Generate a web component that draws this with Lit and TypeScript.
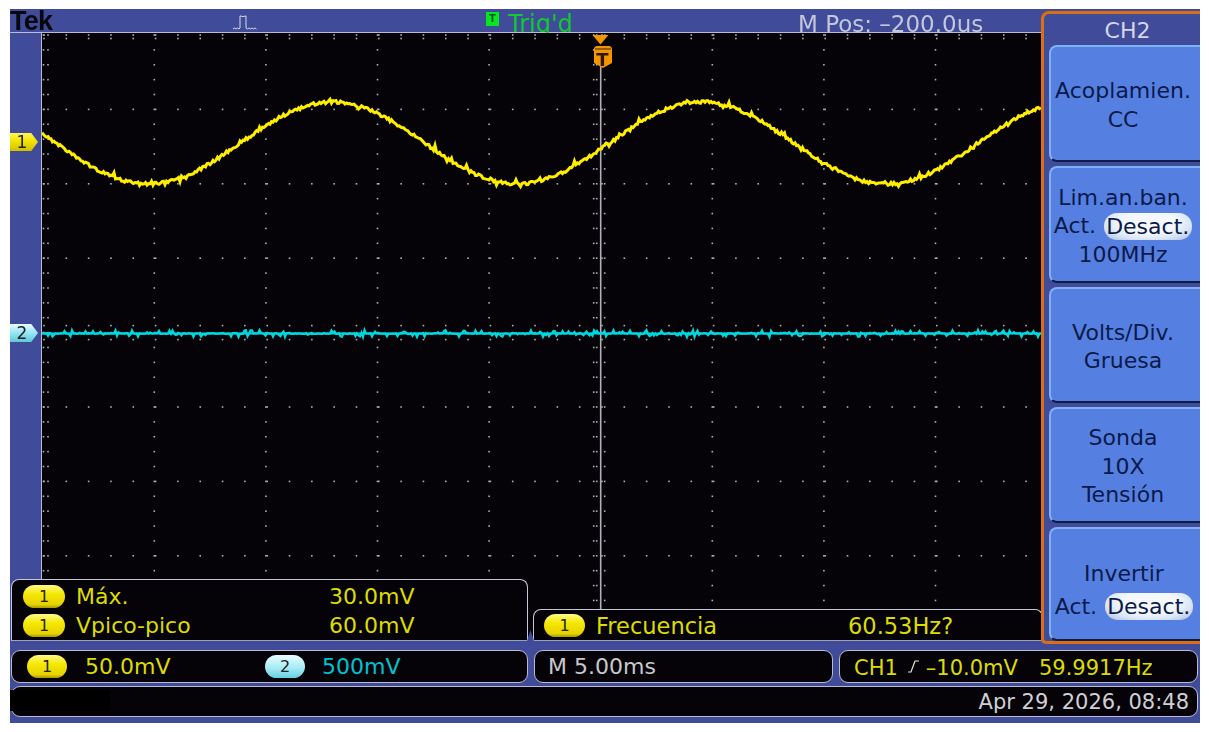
import { LitElement, html, css, svg } from "lit";
import { customElement } from "lit/decorators.js";

const X0 = 41, Y0 = 33, W = 1000, H = 608;
const CX = 599.7, CY = 332.6, DX = 111.6, DY = 74.4;

function rng(seed: number) {
  let s = seed;
  return () => {
    s = (s * 1664525 + 1013904223) % 4294967296;
    return s / 4294967296;
  };
}

function gridDots() {
  const pts: [number, number][] = [];
  for (let k = -5; k <= 4; k++) {
    const x = CX + k * DX;
    if (k === -5 || k === 0) continue;
    for (let y = 35; y < 632; y += DY / 5) pts.push([x, y]);
  }
  for (let r = -4; r <= 4; r++) {
    const y = CY + r * DY;
    for (let k = 0; k < 45; k++) pts.push([X0 + 2 + (k * DX) / 5, y]);
  }
  for (let y = 35; y < 632; y += DY / 5) {
    pts.push([X0 + 1.5, y], [X0 + 6, y]);
    pts.push([CX - 7, y], [CX - 4, y], [CX + 4, y]);
  }
  for (let k = 0; k < 45; k++) {
    const x = X0 + 2 + (k * DX) / 5;
    pts.push([x, CY - 7], [x, CY + 7], [x, 38.5]);
  }
  return pts;
}

function yellowPath() {
  const r = rng(17);
  let d = "";
  for (let x = X0; x <= X0 + W; x += 1.5) {
    const base = 143 + 41 * Math.cos((2 * Math.PI * (x - 147)) / 369);
    const n = (r() - 0.5) * 3 + (r() > 0.92 ? (r() - 0.5) * 8 : 0);
    d += `${d ? "L" : "M"}${x.toFixed(1)} ${(base + n).toFixed(1)}`;
  }
  return d;
}

function cyanPath() {
  const r = rng(91);
  let d = "";
  for (let x = X0; x <= X0 + W; x += 1.5) {
    const n = r() > 0.6 ? (r() - 0.5) * 7 : (r() - 0.5) * 0.8;
    d += `${d ? "L" : "M"}${x.toFixed(1)} ${(333.5 + n).toFixed(1)}`;
  }
  return d;
}

const DOTS = gridDots();
const YEL = yellowPath();
const CYA = cyanPath();

@customElement("app-root")
export class AppRoot extends LitElement {
  static styles = css`
    :host {
      display: block;
      width: 1209px;
      height: 732px;
      background: #fff;
      padding: 9px 9px 9px 10px;
      box-sizing: border-box;
      font-family: "DejaVu Sans", sans-serif;
      overflow: hidden;
    }
    .frame {
      width: 1190px;
      height: 714px;
      background: #404c99;
      display: grid;
      grid-template-columns: 1031px 159px;
      grid-template-rows: 24px 608px 1fr;
      filter: blur(0.5px);
    }
    .top {
      position: relative;
      display: grid;
      grid-template-columns: 222px 254px 22px 290px 1fr;
      align-items: end;
      border-bottom: 1.5px solid #b9bcd0;
      box-sizing: border-box;
    }
    .tek {
      font: bold 27px/24px "Liberation Sans", sans-serif;
      color: #07070f;
      letter-spacing: -0.8px;
      margin-bottom: 1px;
    }
    .pulse { width: 28px; height: 18px; align-self: center; }
    .tbox {
      width: 13px;
      height: 14px;
      background: #06e61e;
      color: #053;
      font: bold 10px/14px "DejaVu Sans", sans-serif;
      text-align: center;
      align-self: start;
      margin-top: 3px;
    }
    .trig {
      color: #13cb2d;
      font-size: 24px;
      line-height: 26px;
      margin-bottom: -3px;
    }
    .mpos {
      color: #c4c7dc;
      font-size: 23px;
      line-height: 24px;
      white-space: pre;
      margin-bottom: -2px;
    }
    .screen {
      grid-column: 1;
      grid-row: 2;
      position: relative;
      display: flex;
    }
    .rail { width: 31px; flex: none; }
    .plot {
      width: 1000px;
      height: 608px;
      background: #050308;
      border-left: 1.5px solid #b9bcd0;
      box-sizing: border-box;
      flex: none;
    }
    .plot svg { display: block; }
    .tag {
      position: absolute;
      left: 0;
      width: 28px;
      height: 18px;
      clip-path: polygon(0 0, 76% 0, 100% 50%, 76% 100%, 0 100%);
      color: #222;
      font: 17px/18px "DejaVu Sans", sans-serif;
      text-align: center;
      padding-right: 4px;
      box-sizing: border-box;
    }
    .tag.one { top: 100px; background: linear-gradient(#fff45a, #f4e300 45%, #d0bf00); }
    .tag.two { top: 291px; background: linear-gradient(#e6fbff, #8fe4f2 55%, #5ec7da); }
    .panel {
      position: absolute;
      background: #050308;
      border: 1.5px solid #c6c8d6;
      border-radius: 8px 8px 0 0;
      border-bottom-color: #9ea1b6;
      box-sizing: border-box;
      color: #dcdc00;
      font-size: 22px;
    }
    .panel.meas {
      left: 1px;
      bottom: 0;
      width: 517px;
      height: 62px;
      display: grid;
      grid-template-columns: 42px 242px 1fr;
      grid-auto-rows: 29px;
      column-gap: 11px;
      align-items: center;
      padding: 2px 0 0 11px;
    }
    .panel.freq {
      left: 523px;
      bottom: 0;
      width: 510px;
      height: 32px;
      display: grid;
      grid-template-columns: 41px 241px 1fr;
      column-gap: 11px;
      align-items: center;
      padding: 1px 0 0 10px;
      font-size: 22.5px;
    }
    .notch {
      position: absolute;
      left: 517px;
      bottom: 0;
      width: 7px;
      height: 11px;
      background: #404c99;
      clip-path: polygon(50% 0, 100% 100%, 0 100%);
    }
    .pill {
      display: block;
      height: 23px;
      border-radius: 12px;
      font: 16px/23px "DejaVu Sans", sans-serif;
      color: #222;
      text-align: center;
    }
    .pill.y { background: linear-gradient(#fff98a, #f5e800 40%, #e6d200 85%, #a69a00); }
    .pill.c { background: linear-gradient(#eafcff, #a8ecf6 55%, #66cfe2); }
    .label, .value { white-space: nowrap; }
    .menu {
      grid-column: 2;
      grid-row: 1 / span 2;
      margin: 2px 0 -3px 0;
      background: #404c99;
      border: solid #dc6f12;
      border-width: 3px 0 3px 3px;
      border-radius: 8px 0 0 5px;
      box-sizing: border-box;
      display: grid;
      grid-template-rows: 27px 117px 117px 116px 116px 114px;
      gap: 4px;
      padding: 0 0 0 5px;
      z-index: 1;
      color: #0b1a4a;
    }
    .menu h2 {
      margin: 0;
      font-weight: 400;
      font-size: 22px;
      line-height: 33px;
      color: #d4d7e8;
      text-align: center;
      padding-left: 6px;
    }
    .btn {
      background: #5580e2;
      border-radius: 8px 0 0 8px;
      border-top: 2px solid #7fb2f2;
      border-left: 2px solid #7fb2f2;
      border-bottom: 2px solid #0e1c4a;
      display: flex;
      flex-direction: column;
      justify-content: center;
      align-items: center;
      font-size: 22px;
      line-height: 28.5px;
      padding: 4px 5px 0 0;
      box-sizing: border-box;
      white-space: nowrap;
    }
    .btn .row { display: flex; align-items: center; gap: 8px; }
    .btn .on {
      background: radial-gradient(ellipse at 50% 35%, #f4f8fd 45%, #d9e4f4 70%, #a4b7dc 100%);
      border-radius: 13px;
      padding: 0 3px 0 2px;
      line-height: 27px;
    }
    .btn.inv { padding-top: 13px; padding-right: 3px; }
    .btn.inv .row { margin-top: 4px; }
    .status {
      grid-column: 1 / span 2;
      grid-row: 3;
      display: grid;
      grid-template-columns: 517px 299px 359px;
      grid-template-rows: 33px 31px;
      column-gap: 6px;
      row-gap: 3px;
      padding: 9px 3px 0 1px;
    }
    .cell {
      background: #050308;
      border: 1.5px solid #b9bcd0;
      border-radius: 9px;
      box-sizing: border-box;
      font-size: 21px;
      display: flex;
      align-items: center;
      white-space: pre;
    }
    .cell.scales { color: #dcdc00; padding-left: 15px; font-size: 22px; }
    .cell.scales .pill { width: 40px; }
    .cell.scales .a { margin-left: 18px; width: 180px; }
    .cell.scales .b { color: #00c3cf; margin-left: 17px; }
    .cell.time { color: #c8c8cc; padding-left: 13px; font-size: 22px; }
    .cell.trigger { color: #dcdc00; padding: 3px 0 0 14px; }
    .cell.trigger svg { margin: -4px 7px 0 10px; }
    .cell.trigger .hz { margin-left: 21px; }
    .cell.date {
      grid-column: 1 / span 3;
      justify-content: flex-end;
      color: #d0d0d4;
      padding-right: 8px;
      position: relative;
    }
    .blot {
      position: absolute;
      left: -2px;
      top: 3px;
      width: 100px;
      height: 21px;
      background: #000;
    }
  `;

  private pill(n: string, c = "y") {
    return html`<span class="pill ${c}">${n}</span>`;
  }

  render() {
    return html`
      <div class="frame">
        <div class="top">
          <span class="tek">Tek</span>
          <svg class="pulse" viewBox="0 0 28 18" fill="none" stroke="#d8dbe8" stroke-width="1">
            <path d="M1 16l1.5-1 1.5 1 1.5-1 1.500 1 1-1V3h1.500l.8 1 .8-1 .8 1 .6-1h1.500v12l1.500 1 1.500-1 1.500 1 1.500-1 1.500 1 1.500-1 1.500 1"></path>
          </svg>
          <span class="tbox">T</span>
          <span class="trig">Trig'd</span>
          <span class="mpos">M Pos: –200.0us</span>
        </div>

        <div class="screen">
          <div class="rail"></div>
          <div class="plot">
            <svg width="${W}" height="${H}" viewBox="${X0} ${Y0} ${W} ${H}">
              ${DOTS.map(
                ([x, y]) => svg`<rect x="${x - 0.8}" y="${y - 0.8}" width="1.600" height="1.600" fill="#b0b0b0"></rect>`
              )}
              <line x1="${CX}" y1="66" x2="${CX}" y2="610" stroke="#b0b0b8" stroke-width="1.600"></line>
              <path d="${CYA}" fill="none" stroke="#00d8de" stroke-width="2.200"></path>
              <line x1="${X0}" y1="333.500" x2="${X0 + W}" y2="333.500" stroke="#00d8de" stroke-width="2"></line>
              <path d="${YEL}" fill="none" stroke="#ffee00" stroke-width="3"></path>
              <path d="M591.500 35h16l-8 9.500z" fill="#f29500"></path>
              <path d="M593 48l2-2h14l2 2v15l-9 5-9-5z" fill="#f29500"></path>
              <path d="M594 49h16" stroke="#3a2400" stroke-width="1"></path>
              <text x="601.500" y="66" text-anchor="middle" font-family="DejaVu Sans" font-weight="700" font-size="18" fill="#2a1800">T</text>
            </svg>
          </div>
          <span class="tag one">1</span>
          <span class="tag two">2</span>

          <div class="panel meas">
            ${this.pill("1")}<span class="label">Máx.</span><span class="value">30.0mV</span>
            ${this.pill("1")}<span class="label">Vpico-pico</span><span class="value">60.0mV</span>
          </div>
          <div class="panel freq">
            ${this.pill("1")}<span class="label">Frecuencia</span><span class="value">60.53Hz?</span>
          </div>
          <span class="notch"></span>
        </div>

        <div class="menu">
          <h2>CH2</h2>
          <div class="btn"><span>Acoplamien.</span><span>CC</span></div>
          <div class="btn">
            <span>Lim.an.ban.</span>
            <span class="row"><span>Act.</span><span class="on">Desact.</span></span>
            <span>100MHz</span>
          </div>
          <div class="btn"><span>Volts/Div.</span><span>Gruesa</span></div>
          <div class="btn"><span>Sonda</span><span>10X</span><span>Tensión</span></div>
          <div class="btn inv">
            <span>Invertir</span>
            <span class="row"><span>Act.</span><span class="on">Desact.</span></span>
          </div>
        </div>

        <div class="status">
          <div class="cell scales">
            ${this.pill("1")}<span class="a">50.0mV</span>${this.pill("2", "c")}<span class="b">500mV</span>
          </div>
          <div class="cell time">M 5.00ms</div>
          <div class="cell trigger">
            <span>CH1</span>
            <svg width="11" height="13" viewBox="0 0 11 13" fill="none" stroke="#e8e8d8" stroke-width="1.200"><path d="M0 12h3l4-11h4"></path></svg>
            <span>–10.0mV</span><span class="hz">59.9917Hz</span>
          </div>
          <div class="cell date"><span class="blot"></span>Apr 29, 2026, 08:48</div>
        </div>
      </div>
    `;
  }
}
